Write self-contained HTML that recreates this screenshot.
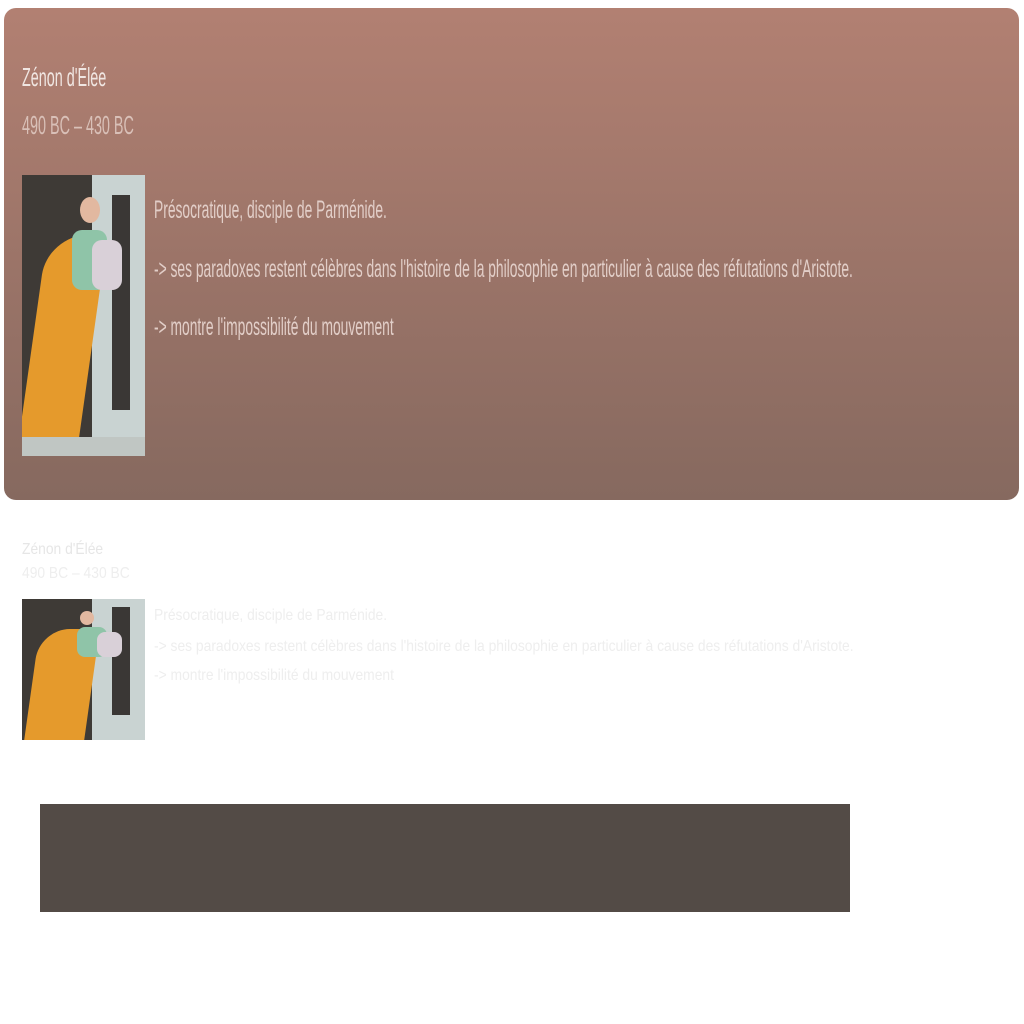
<!DOCTYPE html>
<html><head><meta charset="utf-8"><style>
body{margin:0;width:1024px;height:1024px;background:#fff;position:relative;overflow:hidden;font-family:"Liberation Sans Narrow","Liberation Sans",sans-serif}
.card{position:absolute;left:4px;top:8px;width:1015px;height:492px;border-radius:12px;background:linear-gradient(#b28072,#86695f)}
.t{position:absolute;white-space:nowrap;transform-origin:0 50%;transform:scaleX(.553)}
.s{transform:scaleX(.865)}
.pic{position:absolute;overflow:hidden;background:#c9d3d2}
.pic div{position:absolute}
</style></head><body>
<div class="card"></div>
<div class="t" style="left:22px;top:62px;font-size:26px;color:#f0e6e2">Zénon d'Élée</div>
<div class="t" style="left:22px;top:110px;font-size:26px;color:#d9c0b8">490 BC – 430 BC</div>
<div class="t" style="left:154px;top:196px;font-size:25px;color:#e2cec8">Présocratique, disciple de Parménide.</div>
<div class="t" style="left:154px;top:255px;font-size:25px;color:#e2cec8">-&gt; ses paradoxes restent célèbres dans l'histoire de la philosophie en particulier à cause des réfutations d'Aristote.</div>
<div class="t" style="left:154px;top:313px;font-size:25px;color:#e2cec8">-&gt; montre l'impossibilité du mouvement</div>

<div class="pic" style="left:22px;top:175px;width:123px;height:281px">
<div style="left:0;top:0;width:70px;height:281px;background:#3e3a36"></div>
<div style="left:90px;top:20px;width:18px;height:215px;background:#3a3735"></div>
<div style="left:10px;top:60px;width:60px;height:221px;background:#e59a2c;border-radius:40px 20px 0 0;transform:skewX(-8deg)"></div>
<div style="left:50px;top:55px;width:35px;height:60px;background:#8fc4a8;border-radius:10px"></div>
<div style="left:70px;top:65px;width:30px;height:50px;background:#d9d0d8;border-radius:10px"></div>
<div style="left:58px;top:22px;width:20px;height:26px;background:#e2b8a0;border-radius:50%"></div>
<div style="left:0;top:262px;width:123px;height:19px;background:#c0c6c3"></div>
</div>

<div class="t s" style="left:22px;top:541px;font-size:16px;color:#e6e6e6">Zénon d'Élée</div>
<div class="t s" style="left:22px;top:565px;font-size:16px;color:#eeeeee">490 BC – 430 BC</div>
<div class="t s" style="left:154px;top:607px;font-size:16px;color:#eeeeee">Présocratique, disciple de Parménide.</div>
<div class="t s" style="left:154px;top:638px;font-size:16px;color:#eeeeee">-&gt; ses paradoxes restent célèbres dans l'histoire de la philosophie en particulier à cause des réfutations d'Aristote.</div>
<div class="t s" style="left:154px;top:667px;font-size:16px;color:#eeeeee">-&gt; montre l'impossibilité du mouvement</div>

<div class="pic" style="left:22px;top:599px;width:123px;height:141px">
<div style="left:0;top:0;width:70px;height:141px;background:#3e3a36"></div>
<div style="left:90px;top:8px;width:18px;height:108px;background:#3a3735"></div>
<div style="left:10px;top:30px;width:60px;height:111px;background:#e59a2c;border-radius:30px 15px 0 0;transform:skewX(-8deg)"></div>
<div style="left:55px;top:28px;width:30px;height:30px;background:#8fc4a8;border-radius:8px"></div>
<div style="left:75px;top:33px;width:25px;height:25px;background:#d9d0d8;border-radius:8px"></div>
<div style="left:58px;top:12px;width:14px;height:14px;background:#e2b8a0;border-radius:50%"></div>
</div>

<div style="position:absolute;left:40px;top:804px;width:810px;height:108px;background:#534b46"></div>
</body></html>
